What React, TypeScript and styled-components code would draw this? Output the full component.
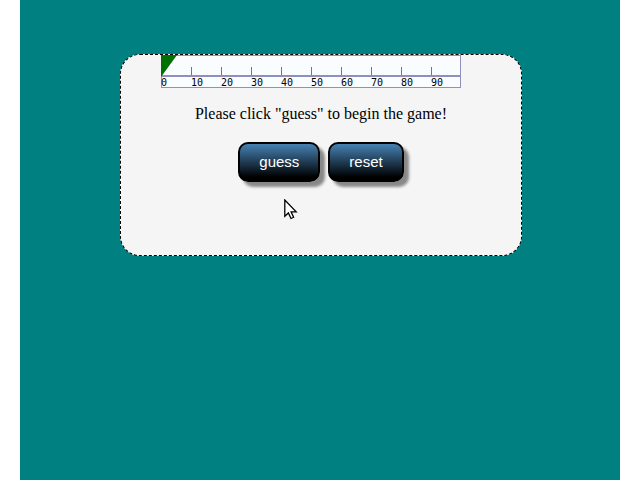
import React from "react";
import styled, { createGlobalStyle } from "styled-components";

const GlobalStyle = createGlobalStyle`
  body {
    margin: 0;
    background: #fff;
    font-family: "Liberation Serif", "Times New Roman", serif;
    font-size: 16px;
    color: #000;
  }
`;

const Stage = styled.main`
  box-sizing: border-box;
  min-height: 100vh;
  margin: 0 20px;
  padding: 54px 98px 20px 100px;
  background: #008080;
`;

const Card = styled.section`
  position: relative;
  min-height: 200px;
  border: 1px dashed #000;
  border-radius: 20px;
  background: #f5f5f5;
`;

const Ruler = styled.div`
  margin: 0 60px 0 40px;
  background: #fafdff;
  box-shadow: inset 0 0 0 1px #9090bf;
`;

const Track = styled.div`
  height: 20px;
  border-bottom: 2px solid #8f8fbb;
  display: grid;
  grid-template-columns: repeat(10, 1fr);
  align-items: end;
`;

const Tick = styled.span`
  height: 8px;
  border-left: 1px solid #7070a8;
`;

const Pointer = styled.svg`
  position: absolute;
  top: 0;
  left: 40px;
  display: block;
`;

const Labels = styled.div`
  display: grid;
  grid-template-columns: repeat(10, 1fr);
  font: 10px/11px "DejaVu Sans Mono", monospace;
`;

const Message = styled.p`
  margin: 16px 0 0;
  line-height: 20px;
  text-align: center;
`;

const Actions = styled.div`
  display: flex;
  justify-content: center;
  gap: 8px;
  margin-top: 18px;
`;

const ActionButton = styled.button`
  box-sizing: border-box;
  height: 40px;
  padding: 0 19px;
  border: 2px solid #000;
  border-radius: 10px;
  background: linear-gradient(#4682b4, #000 92%);
  box-shadow: 5px 5px 3px #888;
  color: #fff;
  font: 15px/20px "Liberation Sans", Arial, sans-serif;
  cursor: pointer;
`;

const Cursor = styled.svg`
  position: absolute;
  left: 163px;
  top: 144px;
  pointer-events: none;
`;

const marks = [0, 10, 20, 30, 40, 50, 60, 70, 80, 90];

export default function App() {
  return (
    <>
      <GlobalStyle />
      <Stage>
        <Card>
          <Ruler>
            <Track>
              {marks.map((mark) => (
                <Tick key={mark} />
              ))}
            </Track>
            <Labels>
              {marks.map((mark) => (
                <span key={mark}>{mark}</span>
              ))}
            </Labels>
          </Ruler>
          <Pointer width="16" height="22" viewBox="0 0 16 22" aria-hidden="true">
            <path d="M0 0H16L0 22Z" fill="#007000" />
          </Pointer>
          <Message>Please click "guess" to begin the game!</Message>
          <Actions>
            <ActionButton type="button">guess</ActionButton>
            <ActionButton type="button">reset</ActionButton>
          </Actions>
          <Cursor width="14" height="22" viewBox="0 0 14 22" aria-hidden="true">
            <path
              d="M.8 1V17.2L4.4 13.9L7 19.5L9.6 18.3L7.1 12.8H12.2Z"
              fill="#fff"
              stroke="#000"
              strokeWidth="1.3"
            />
          </Cursor>
        </Card>
      </Stage>
    </>
  );
}
